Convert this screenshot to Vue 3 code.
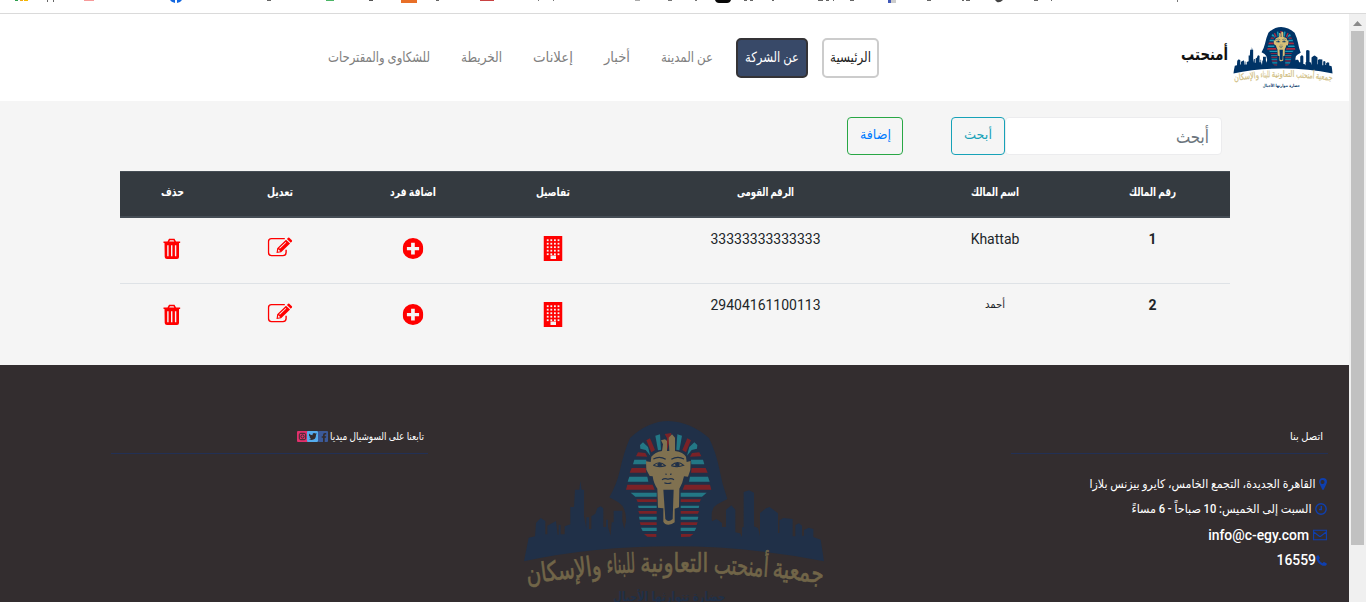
<script setup>
const nav = [
  { t: 'الرئيسية', w: 41, k: 'home' },
  { t: 'عن الشركة', w: 54, k: 'active' },
  { t: 'عن المدينة', w: 52, k: 'n3' },
  { t: 'أخبار', w: 26, k: 'n4' },
  { t: 'إعلانات', w: 40, k: 'n5' },
  { t: 'الخريطة', w: 41, k: 'n6' },
  { t: 'للشكاوى والمقترحات', w: 102, k: 'n7' },
]
const heads = [
  { t: 'رقم المالك', w: 47 },
  { t: 'اسم المالك', w: 48 },
  { t: 'الرقم القومى', w: 57 },
  { t: 'تفاصيل', w: 34 },
  { t: 'اضافة فرد', w: 46 },
  { t: 'تعديل', w: 26 },
  { t: 'حذف', w: 23 },
]
const rows = [
  { id: '1', name: 'Khattab', nid: '33333333333333' },
  { id: '2', name: 'أحمد', nid: '29404161100113', w: 20 },
]
// Clipped bookmark remnants: x, width, height, colour
const marks = [
  [15, 3, 1, '#2e9e4f'], [20, 3, 1, '#f0a818'], [24, 4, 1, '#f5b800'],
  [47, 1, 2, '#666'], [53, 1, 2, '#666'], [84, 10, 1, '#f79a9a'],
  [267, 4, 1, '#666'], [326, 8, 1, '#4bb566'], [369, 4, 1, '#555'],
  [401, 16, 3, '#e86f28'], [436, 3, 1, '#666'], [480, 14, 1, '#c94242'],
  [538, 1, 1, '#777'], [553, 1, 1, '#777'], [635, 5, 1, '#aaa'],
  [668, 4, 1, '#777'], [695, 2, 1, '#777'], [744, 3, 1, '#666'],
  [750, 3, 1, '#666'], [772, 2, 1, '#666'], [818, 5, 1, '#666'],
  [826, 3, 1, '#666'], [833, 1, 1, '#666'], [850, 4, 1, '#666'],
  [888, 3, 3, '#4058b8'], [891, 5, 3, '#ccc'], [927, 4, 1, '#666'],
  [962, 2, 1, '#666'], [966, 4, 1, '#666'], [1034, 4, 1, '#666'],
  [1051, 1, 1, '#666'], [1177, 1, 2, '#777'],
]
// Striped headdress, left half: four corners per band
const bands = [
  ['r', '384,128 406,130 412,141 378,140'], ['c', '373,150 409,150 408,164 369,164'],
  ['r', '365,175 407,175 409,189 359,189'], ['c', '358,201 412,201 415,216 353,216'],
  ['r', '352,225 428,225 434,240 348,240'], ['c', '362,249 440,249 440,261 376,261'],
  ['r', '379,269 440,269 440,277 383,277'], ['c', '384,288 440,288 440,295 386,295'],
  ['r', '385,304 440,304 440,312 388,312'], ['c', '387,321 440,321 440,330 389,330'],
  ['r', '389,338 440,338 440,346 392,346'], ['c', '393,354 440,354 440,364 398,364'],
  ['r', '402,373 439,373 439,382 412,381'],
  ['c', '390,106 399,98 414,112 421,138 407,121 391,117'],
  ['r', '409,92 420,86 435,121 424,128'], ['c', '436,78 450,74 453,120 444,122'],
]
const arc = [
  { t: 'جمعية', x: 862, y: 511, w: 154, r: 8 },
  { t: 'أمنحتب', x: 692, y: 496, w: 164, r: 4 },
  { t: 'التعاونية', x: 493, y: 488, w: 204, r: 0 },
  { t: 'للبناء', x: 334, y: 490, w: 86, r: -3 },
  { t: 'والإسكان', x: 164, y: 508, w: 226, r: -7 },
]
</script>

<template>
  <div class="screen">
    <svg class="defs" width="0" height="0" aria-hidden="true">
      <defs>
        <g id="bandset">
          <polygon v-for="(b, i) in bands" :key="i" :points="b[1]" :class="b[0]" />
        </g>
        <symbol id="logo" viewBox="42 34 900 570">
          <path class="n" d="M42 455L56 384L75 380L78 340L92 325L106 334V374H112V348L138 334L143 375H146V345L152 346V374H164V350L181 344V292L192 292L195 240H208L211 214L215 240H222V320L229 357V323H237V358H244V320L256 312L262 295L272 290L280 296V352H288V330H294V352L302 378L305 338H311V303H337V334L343 358L348 335Q350 294 325 278L298 263Q320 225 329 185Q342 125 360 85Q415 34 475 34Q540 36 597 85Q618 128 628 178Q636 223 652 268L622 284Q600 296 606 335L620 328L636 340V352H648V300L664 287L676 300V368L690 371L696 382V353H701V247L717 242L732 249V350L744 355L750 379V310L768 296L779 292L804 311V370H808V332L820 325L848 328V380H856V346L867 341L876 348V378H882V361L896 354L910 358V382L932 390L942 455Q720 410 490 410Q250 410 42 455Z" />
          <use href="#bandset" />
          <use href="#bandset" transform="matrix(-1 0 0 1 952 0)" />
          <path class="r" d="M464 73L484 70L480 88L472 120H466L471 86Z" />
          <path class="g" d="M424 141Q435 128 456 124L459 104L453 92L465 89L471 94V124H478L476 84L486 74L495 84V124Q520 128 528 141L530 157L542 154L541 181L534 201L522 200Q518 221 508 237L507 293L494 297V338Q486 345 475 345Q464 345 460 336V296L444 294L442 237Q431 222 428 200L419 199L409 180L408 155L422 157Z" />
          <path class="n" d="M460 240H491L488 328Q475 340 466 328Z" />
          <path class="feature" d="M430 148Q449 138 467 149M484 149Q503 138 522 148M430 167Q449 151 466 168Q448 175 430 167M484 167Q503 151 521 167Q502 175 484 168M466 193L470 194M480 194L485 193M456 210Q465 204 474 209Q483 204 492 210M463 219Q474 224 484 219" />
          <ellipse class="n" cx="449" cy="165" rx="7" ry="6" /><ellipse class="n" cx="502" cy="165" rx="7" ry="6" />
          <text v-for="a in arc" :key="a.t" class="arc-text" :x="a.x" :y="a.y" :textLength="a.w" lengthAdjust="spacingAndGlyphs" :transform="`rotate(${a.r} ${a.x} ${a.y})`">{{ a.t }}</text>
          <text class="motto" x="478" y="573" textLength="336" lengthAdjust="spacingAndGlyphs">حضارة تتوارثها الأجيال</text>
        </symbol>
        <symbol id="i-trash" viewBox="0 0 18 22">
          <path d="M1 3.5H17.8V5H1ZM5 3.5L6.5 .8H12L13.5 3.5H11.8L11 2.2H7.5L6.7 3.5Z" />
          <path fill-rule="evenodd" d="M2 5H16.5V19Q16.5 21 14.5 21H4.5Q2.4 21 2.2 19ZM4.7 7.2V18.2H6.1V7.2ZM8.5 7.2V18.2H9.9V7.2ZM12.4 7.2V18.2H13.8V7.2Z" />
        </symbol>
        <symbol id="i-edit" viewBox="0 0 25 20">
          <path d="M17.3 1.6H4Q1 1.6 1 4.6V15.6Q1 18.6 4 18.6H15.5Q18.6 18.6 18.6 15.6V12.7" fill="none" stroke="currentColor" stroke-width="1.4" />
          <path fill-rule="evenodd" d="M9 16L9.7 11.3L18.5 2.7L22.6 6.6L13.6 15.3ZM10.7 12.2L10.4 14.7L12.9 14.2ZM12.3 11.7L18.8 5.4L18.2 4.9L11.7 11.1Z" /><path d="M19.4 1.9L20.6 .7Q21.2 .2 21.8 .7L24.4 3.2Q25 3.8 24.4 4.5L23.3 5.7Z" />
        </symbol>
        <symbol id="i-plus" viewBox="0 0 20 20">
          <path fill-rule="evenodd" d="M10 0A10 10 0 1 1 10 20A10 10 0 1 1 10 0ZM8.2 4.5V8.5H4.2V11.6H8.2V15.7H11.7V11.6H15.8V8.5H11.7V4.5Z" />
        </symbol>
        <symbol id="i-building" viewBox="0 0 19 25">
          <path d="M0 0H19V25H0Z" />
          <g fill="#f5f5f5">
            <template v-for="r in 5" :key="r"><rect v-for="c in 4" :key="c" :x="c * 3.6 - .3" :y="r * 3.5 - .2" width="1.8" height="1.8" /></template>
            <rect x="7" y="19.5" width="5.5" height="3.5" />
          </g>
        </symbol>
      </defs>
    </svg>

    <svg class="strip" viewBox="0 0 1366 13">
      <rect v-for="(m, i) in marks" :key="i" :x="m[0]" y="0" :width="m[1]" :height="m[2]" :fill="m[3]" />
      <path d="M170 0H182Q180 3 177 3V0H175V3Q171 2 170 0Z" fill="#1468e0" />
      <path d="M715 0H731Q730 3 727 3H719Q716 3 715 0Z" fill="#080808" />
      <path d="M995 0H1003Q1000 3 997 2Z" fill="#444" />
    </svg>

    <div class="body">
      <main dir="rtl">
        <header class="bar">
          <svg class="brand-logo" viewBox="42 34 900 570"><use href="#logo" x="42" y="34" width="900" height="570" /></svg>
          <svg class="txt brand" width="47" height="30"><text x="23.5" y="19" textLength="47" lengthAdjust="spacingAndGlyphs">أمنحتب</text></svg>
          <nav>
            <a v-for="n in nav" :key="n.k" :class="n.k">
              <svg class="txt" :width="n.w" height="24"><text :x="n.w / 2" y="16" :textLength="n.w" lengthAdjust="spacingAndGlyphs">{{ n.t }}</text></svg>
            </a>
          </nav>
        </header>

        <section class="tools">
          <div class="field"><svg class="txt" width="33" height="24"><text x="16.5" y="17" textLength="33" lengthAdjust="spacingAndGlyphs">أبحث</text></svg></div>
          <button class="search"><svg class="txt" width="28" height="24"><text x="14" y="15" textLength="28" lengthAdjust="spacingAndGlyphs">أبحث</text></svg></button>
          <button class="add"><svg class="txt" width="31" height="24"><text x="15.5" y="15" textLength="31" lengthAdjust="spacingAndGlyphs">إضافة</text></svg></button>
        </section>

        <div class="table">
          <div class="row head">
            <div v-for="h in heads" :key="h.t"><svg class="txt" :width="h.w" height="20"><text :x="h.w / 2" y="13" :textLength="h.w" lengthAdjust="spacingAndGlyphs">{{ h.t }}</text></svg></div>
          </div>
          <div v-for="r in rows" :key="r.id" class="row item">
            <b>{{ r.id }}</b>
            <div>
              <svg v-if="r.w" class="txt ar" :width="r.w" height="20"><text :x="r.w / 2" y="13" :textLength="r.w" lengthAdjust="spacingAndGlyphs">{{ r.name }}</text></svg>
              <template v-else>{{ r.name }}</template>
            </div>
            <div>{{ r.nid }}</div>
            <div class="ic"><svg width="19" height="25"><use href="#i-building" /></svg></div>
            <div class="ic plus"><svg width="21" height="21"><use href="#i-plus" /></svg></div>
            <div class="ic edit"><svg width="25" height="20"><use href="#i-edit" /></svg></div>
            <div class="ic trash"><svg width="18" height="22"><use href="#i-trash" /></svg></div>
          </div>
        </div>

        <footer>
          <div class="contact">
            <div class="title"><svg class="txt" width="33" height="20"><text x="16.5" y="14" textLength="33" lengthAdjust="spacingAndGlyphs">اتصل بنا</text></svg></div>
            <ul>
              <li class="l1">
                <svg class="fi" width="8" height="12" viewBox="0 0 8 12"><path fill-rule="evenodd" d="M4 0A4 4 0 0 1 8 4Q8 5 5 11Q4 13 3 11Q0 5 0 4A4 4 0 0 1 4 0ZM4 2.1A2 2 0 1 0 4 6A2 2 0 0 0 4 2.1Z" /></svg>
                <svg class="txt" width="227" height="22"><text x="113.5" y="15" textLength="226" lengthAdjust="spacingAndGlyphs">القاهرة الجديدة، التجمع الخامس، كايرو بيزنس بلازا</text></svg>
              </li>
              <li class="l2">
                <svg class="fi" width="12" height="12" viewBox="0 0 12 12"><path d="M6 .8A5.2 5.2 0 1 1 6 11.2A5.2 5.2 0 1 1 6 .8M6.3 3V6.5H4" fill="none" stroke="currentColor" stroke-width="1.4" /></svg>
                <svg class="txt" width="181" height="22"><text x="90.5" y="15" textLength="180" lengthAdjust="spacingAndGlyphs">السبت إلى الخميس: 10 صباحاً - 6 مساءً</text></svg>
              </li>
              <li class="l3">
                <svg class="fi" width="14" height="12" viewBox="0 0 14 12"><path d="M.6 1.2H13.4V10.8H.6ZM.8 3L6 7Q7 7.8 8 7L13.2 3" fill="none" stroke="currentColor" stroke-width="1.1" /></svg>
                <span>info@c-egy.com</span>
              </li>
              <li class="l4">
                <svg class="fi" width="11" height="11" viewBox="0 0 11 11"><path d="M.3 1.5Q1.5 0 2.5 .2L3.9 3Q4 3.5 2.8 4.5Q4 7 6.6 8.2Q7.6 6.8 8.1 7.1L10.8 8.6Q11 9.5 10 10.4Q8 11.5 5.2 10Q1.7 8 .3 4.3Q-.1 2.5 .3 1.5Z" /></svg>
                <span>16559</span>
              </li>
            </ul>
          </div>
          <svg class="foot-logo" viewBox="42 34 900 570"><use href="#logo" x="42" y="34" width="900" height="570" /></svg>
          <div class="social">
            <div class="title">
              <svg class="txt" width="94" height="20"><text x="47" y="14" textLength="94" lengthAdjust="spacingAndGlyphs">تابعنا على السوشيال ميديا</text></svg>
              <svg class="badges" width="31" height="11" viewBox="0 0 31 11">
                <rect width="11" height="11" rx="1" fill="#e1306c" /><g fill="none" stroke="#332d2f"><rect x="2.3" y="2.3" width="6.4" height="6.4" rx="1.5" /><circle cx="5.5" cy="5.5" r="1.6" /></g>
                <rect x="10" width="11" height="11" rx="1" fill="#55acee" /><path d="M12 2.5Q13.5 4.2 15.4 4.2Q15.5 2 17.2 2.1L18.3 2.6L19.6 2.3L19 4Q19 8.8 14.5 9L12 8.3L14 7.6L12.4 6.2L13 6L12 4.4Z" fill="#332d2f" />
                <rect x="21" width="10" height="11" rx="1" fill="#3b5998" /><path d="M26 11V6.8H24.7V5.2H26V4Q26 2 28 2H29.2V3.6H28.3Q27.7 3.6 27.7 4.2V5.2H29.2L29 6.8H27.7V11Z" fill="#332d2f" />
              </svg>
            </div>
          </div>
        </footer>
      </main>
      <aside><svg width="9" height="5" viewBox="0 0 9 5"><path d="M0 5L4.5 0L9 5Z" fill="#8a8a8a" /></svg><i></i></aside>
    </div>
  </div>
</template>

<style>
body { overflow: hidden; }
</style>
<style scoped>
.screen { width: 1366px; height: 602px; overflow: hidden; background: #fff; font-family: Roboto, "DejaVu Sans", sans-serif; color: #212529; }
.defs { display: block; }
.strip { display: block; width: 1366px; height: 13px; border-bottom: 1px solid #dadada; }
.body { display: flex; height: 588px; }
main { width: 1349px; height: 588px; background: #f5f5f5; overflow: hidden; flex: none; }
aside { width: 17px; background: #f0f0f0; display: flex; flex-direction: column; align-items: center; padding-top: 7px; box-sizing: border-box; }
aside i { width: 13px; height: 514px; background: #c1c1c1; margin-top: 5px; }
.txt { display: block; overflow: visible; flex: none; fill: currentColor; font-family: Roboto, "DejaVu Sans", sans-serif; }
.txt text { text-anchor: middle; direction: rtl; }
.n { fill: var(--navy); }
.r { fill: var(--red); }
.c { fill: var(--cyan); }
.g { fill: var(--gold); }
.feature { fill: none; stroke: var(--navy); stroke-width: 3.5; }
.arc-text { fill: var(--letters); font: 80px "DejaVu Sans", sans-serif; text-anchor: middle; direction: rtl; stroke: var(--letters); stroke-width: 2; }
.motto { fill: var(--navy); font: bold 38px "DejaVu Sans", sans-serif; text-anchor: middle; direction: rtl; }
.bar { height: 87px; background: #fff; display: flex; box-sizing: border-box; padding: 13px 16px 0 0; }
.brand-logo { width: 100px; height: 63px; --navy: #003366; --red: #a82b40; --cyan: #1599b5; --gold: #d8c078; --letters: #d2bf86; }
.brand { margin: 14px 5px 0 0; font-size: 17px; font-weight: bold; color: #111; }
nav { display: flex; margin: 11px 302px 0 0; height: 40px; font-size: 14px; color: #808080; }
nav a { display: flex; align-items: center; box-sizing: border-box; height: 40px; }
.home { border: 2px solid #ccc; border-radius: 5px; padding: 0 6px; width: 57px; color: #222; }
.active { border: 2px solid #343336; border-radius: 5px; background: #384968; color: #fff; width: 72px; padding: 0 7px; margin: 0 14px 0 23px; }
.n4, .n5, .n6, .n7 { margin-right: 31px; }
.tools { display: flex; height: 70px; padding: 16px 127px 0 0; box-sizing: border-box; }
.field { width: 217px; height: 38px; background: #fff; border: 1px solid #ececee; border-radius: 4px; box-sizing: border-box; padding: 8px 12px; color: #6c757d; font-size: 18px; }
button { display: flex; justify-content: center; height: 38px; box-sizing: border-box; border-radius: 4px; background: transparent; padding: 6px 0 0 0; font-size: 13px; }
.search { width: 54px; border: 1px solid #17a2b8; color: #17a2b8; }
.add { width: 56px; border: 1px solid #28a745; color: #007bff; margin-right: 48px; }
.table { width: 1110px; margin-right: 119px; font-size: 14px; }
.row { display: grid; grid-template-columns: 155px 160px 299px 126px 154px 112px 104px; text-align: center; }
.row .txt { margin: 0 auto; }
.head { height: 47px; box-sizing: border-box; background: #343a40; border-top: 1px solid #454d55; border-bottom: 2px solid #454d55; color: #fff; font-weight: bold; font-size: 11.5px; padding-top: 11px; }
.item { height: 65px; box-sizing: border-box; padding-top: 11px; line-height: 21px; }
.item + .item { height: 66px; border-top: 1px solid #dee2e6; }
.ar { font-size: 11px; }
.ic { color: red; fill: currentColor; padding-top: 7px; }
.ic svg { display: block; margin: 0 auto; transform: translateX(-.5px); }
.plus { padding-top: 9px; }
.edit { padding-top: 8px; }
.trash { padding-top: 9px; }
footer { height: 240px; margin-top: 16px; background: #332d2f; color: #fff; display: flex; }
.title { display: flex; align-items: center; width: 317px; height: 34px; font-size: 10.5px; border-bottom: 1px solid #223055; box-sizing: border-box; padding: 0 5px 2px 0; }
.contact { width: 425px; padding: 55px 21px 0 0; box-sizing: border-box; }
.contact ul { list-style: none; margin: 17px 1px 0 0; padding: 0; font-size: 13.9px; font-weight: 500; }
li { height: 25.5px; display: flex; align-items: center; }
li .txt { font-size: 12px; }
.fi { color: #0f3fae; fill: currentColor; flex: none; }
.l1 .fi { margin: 0 0 0 3px; }
.l2 .fi { margin-left: 3px; }
.l3 .fi { margin-left: 4px; }
.foot-logo { flex: none; width: 300px; height: 190px; margin: 56px 100px 0 96px; --navy: #203048; --red: #7a2227; --cyan: #237785; --gold: #807150; --letters: #716548; }
.social { width: 400px; padding-top: 55px; }
.social .title { padding-right: 4px; }
.badges { margin: 2px 2px 0 0; }
</style>
